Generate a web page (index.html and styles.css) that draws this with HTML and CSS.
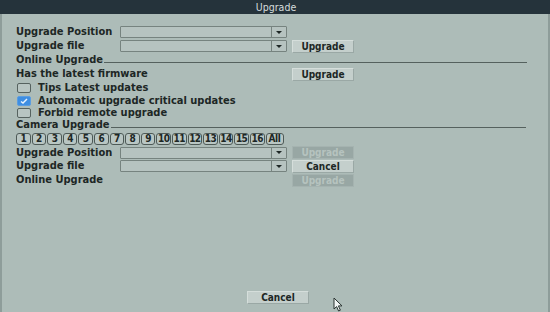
FILE: index.html
```html
<!DOCTYPE html>
<html>
<head>
<meta charset="utf-8">
<link rel="stylesheet" href="styles.css">
</head>
<body>
<div class="window">
  <div class="titlebar">Upgrade</div>
  <div class="body">
    <div class="row h14">
      <span class="label">Upgrade Position</span>
      <div class="select"><div class="field"></div><div class="arrow"><span class="tri"></span></div></div>
    </div>
    <div class="row h14">
      <span class="label">Upgrade file</span>
      <div class="select"><div class="field"></div><div class="arrow"><span class="tri"></span></div></div>
      <div class="btn">Upgrade</div>
    </div>
    <div class="row h14 section">
      <span class="stitle">Online Upgrade</span><span class="rule"></span>
    </div>
    <div class="row h14">
      <span class="label wide">Has the latest firmware</span>
      <div class="btn">Upgrade</div>
    </div>
    <div class="row h14 check">
      <span class="box"></span><span>Tips Latest updates</span>
    </div>
    <div class="row h12 check">
      <span class="box on"><svg width="10" height="8" viewBox="0 0 10 8"><path d="M2 4.5 L4 6.1 L8 2" fill="none" stroke="#eaf4ff" stroke-width="1.4"/></svg></span><span>Automatic upgrade critical updates</span>
    </div>
    <div class="row h12 check">
      <span class="box"></span><span>Forbid remote upgrade</span>
    </div>
    <div class="row h12 section">
      <span class="stitle">Camera Upgrade</span><span class="rule"></span>
    </div>
    <div class="row h15 chans">
      <span class="ch">1</span><span class="ch">2</span><span class="ch">3</span><span class="ch">4</span><span class="ch">5</span><span class="ch">6</span><span class="ch">7</span><span class="ch">8</span><span class="ch">9</span><span class="ch">10</span><span class="ch">11</span><span class="ch">12</span><span class="ch">13</span><span class="ch">14</span><span class="ch">15</span><span class="ch">16</span><span class="ch all">All</span>
    </div>
    <div class="row h13">
      <span class="label">Upgrade Position</span>
      <div class="select"><div class="field"></div><div class="arrow"><span class="tri"></span></div></div>
      <div class="btn off">Upgrade</div>
    </div>
    <div class="row h14">
      <span class="label">Upgrade file</span>
      <div class="select"><div class="field"></div><div class="arrow"><span class="tri"></span></div></div>
      <div class="btn">Cancel</div>
    </div>
    <div class="row h14">
      <span class="label">Online Upgrade</span>
      <div class="spacer"></div>
      <div class="btn off">Upgrade</div>
    </div>
    <div class="footer">
      <div class="btn">Cancel</div>
    </div>
  </div>
  <svg class="cursor" width="12" height="16" viewBox="0 0 12 16"><path d="M1 1 L1 12 L3.6 9.6 L5.6 14 L7.4 13.2 L5.4 8.9 L9 8.9 Z" fill="#f2f6f5" stroke="#2a3432" stroke-width="1"/></svg>
</div>
</body>
</html>
```
FILE: styles.css
```css
html, body {
  margin: 0;
  padding: 0;
  background: #adbcb8;
}
.window {
  position: relative;
  width: 550px;
  height: 312px;
  display: flex;
  flex-direction: column;
  background: #adbcb8;
  font-family: "DejaVu Sans Condensed", "DejaVu Sans", sans-serif;
  font-stretch: condensed;
  font-size: 11px;
  font-weight: bold;
  color: #1d2725;
  overflow: hidden;
}
.titlebar {
  height: 14px;
  line-height: 14px;
  background: #25333b;
  color: #d5dddd;
  text-align: center;
  font-weight: normal;
  font-size: 10.5px;
  padding-left: 2px;
}
.body {
  flex: 1;
  display: flex;
  flex-direction: column;
  padding: 11px 0 8px 14px;
  border-left: 2px solid #8e9d9a;
  border-right: 2px solid #8e9d9a;
}
.row {
  display: flex;
  align-items: center;
  white-space: nowrap;
}
.h12 { height: 12px; line-height: 12px; }
.h13 { height: 13px; line-height: 13px; }
.h14 { height: 14px; line-height: 14px; }
.h15 { height: 15px; line-height: 15px; }
.label {
  width: 104px;
  flex: none;
}
.label.wide { width: 271px; }
.select {
  width: 167px;
  height: 12px;
  display: flex;
  flex: none;
  box-sizing: border-box;
  border: 1px solid #76837f;
  border-radius: 1px;
  background: #b6c3c0;
}
.field {
  flex: 1;
  border-right: 1px solid #76837f;
}
.arrow {
  width: 14px;
  display: flex;
  align-items: center;
  justify-content: center;
}
.tri {
  width: 0;
  height: 0;
  border-left: 3px solid transparent;
  border-right: 3px solid transparent;
  border-top: 3px solid #1d2725;
}
.btn {
  margin-left: 5px;
  width: 62px;
  height: 13px;
  box-sizing: border-box;
  border: 1px solid #d5dedb;
  border-right-color: #9aa8a5;
  border-bottom-color: #9aa8a5;
  background: #c4cfcc;
  text-align: center;
  font-size: 10px;
  line-height: 11px;
  flex: none;
}
.btn.off {
  background: #98a7a4;
  border-color: #a5b3b0;
  color: #b6c3bf;
}
.spacer { width: 167px; flex: none; }
.section .stitle { flex: none; }
.rule {
  width: 423px;
  height: 1px;
  background: #55615e;
  align-self: flex-end;
  margin-bottom: 4px;
  margin-left: 1px;
}
.section:nth-of-type(8) .rule { width: 415px; margin-bottom: 3px; }
.check .box {
  width: 12px;
  height: 8px;
  margin: 0 7px 0 1px;
  border: 1px solid #56625f;
  border-radius: 2px;
  background: #b8c5c2;
  flex: none;
  display: flex;
  align-items: center;
  justify-content: center;
}
.check .box.on {
  background: #3e8ee2;
  border-color: #5b9de0;
}
.chans {
  gap: 1px;
}
.ch {
  width: 14.6px;
  height: 12px;
  box-sizing: border-box;
  border: 1px solid #4e5a57;
  border-radius: 3px;
  background: #b9c6c3;
  font-size: 10px;
  line-height: 10px;
  text-align: center;
  flex: none;
  letter-spacing: -0.6px;
}
.ch.all { width: 18px; letter-spacing: -0.3px; }
.footer {
  margin-top: auto;
  display: flex;
  justify-content: center;
  padding-left: 0;
}
.footer .btn { margin-left: 0; margin-right: 8px; }
.cursor {
  position: absolute;
  left: 333px;
  top: 297px;
}
```
